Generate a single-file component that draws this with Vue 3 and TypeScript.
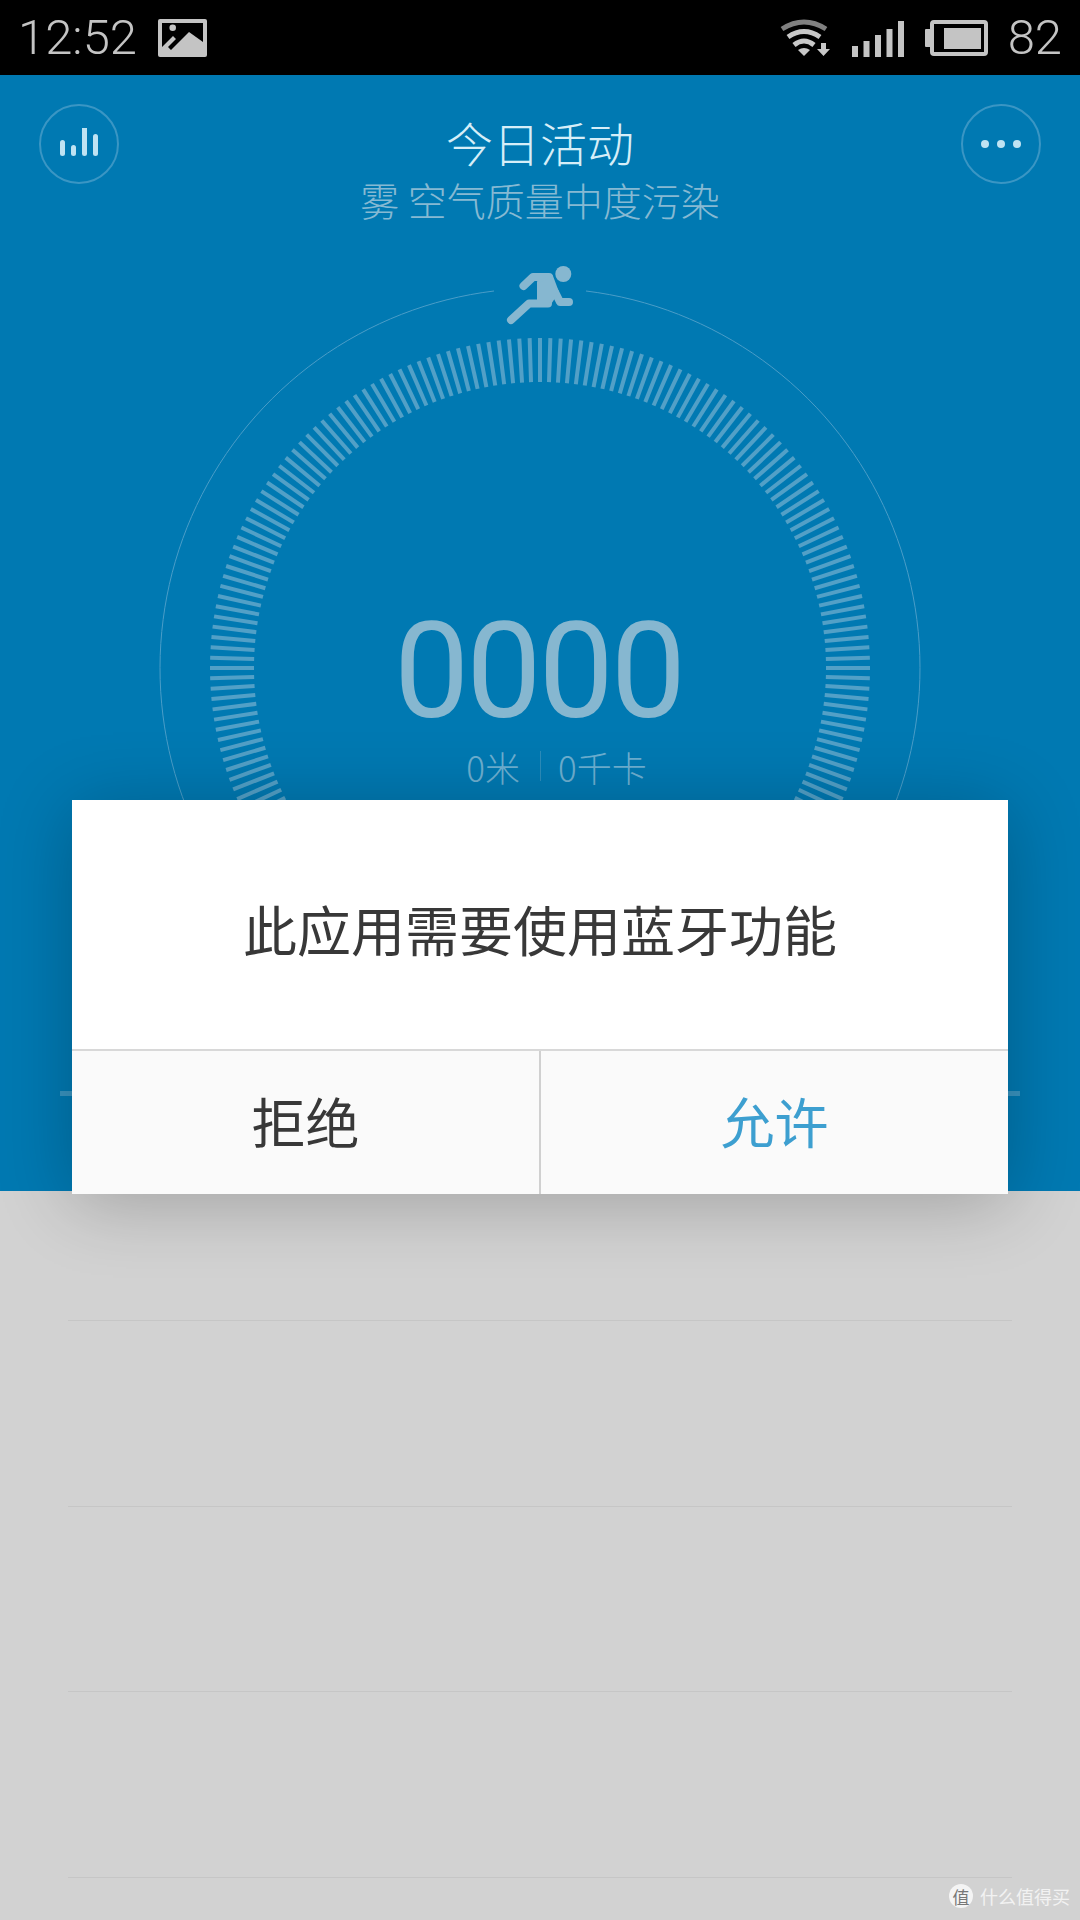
<script setup lang="ts">
// Dial ticks are generated around the ring; everything else is static markup.
const CX = 400
const CY = 410
const TICKS = 200

const ticks = Array.from({ length: TICKS }, (_, i) => {
  const a = (i / TICKS) * Math.PI * 2
  return {
    x1: CX + Math.sin(a) * 286,
    y1: CY - Math.cos(a) * 286,
    x2: CX + Math.sin(a) * 330,
    y2: CY - Math.cos(a) * 330,
  }
})

const signalBars = [
  { x: 0, h: 11 },
  { x: 11.5, h: 16 },
  { x: 23, h: 22 },
  { x: 34.5, h: 28 },
  { x: 46, h: 36 },
]

const rows = [1, 2, 3, 4]
</script>

<template>
  <div class="page">
    <header class="status">
      <span class="status-text">12:52</span>
      <svg class="status-image" width="49" height="38" viewBox="0 0 49 38">
        <rect width="49" height="38" rx="2" fill="#c4c4c4" />
        <path d="M4 4H45V23L31 13L13 31L10 28L18 20L15 17L4 28Z" fill="#000" />
        <circle cx="14.700" cy="8.700" r="3.300" fill="#c4c4c4" />
      </svg>
      <span class="status-spacer"></span>
      <svg class="status-wifi" width="52" height="38" viewBox="0 0 52 38">
        <path d="M2 10Q24 -4 46 10" fill="none" stroke="#808080" stroke-width="5" />
        <path d="M8 18Q24 7 40 18" fill="none" stroke="#c8c8c8" stroke-width="5" />
        <path d="M14 26Q24 18 34 26" fill="none" stroke="#c8c8c8" stroke-width="5" />
        <path d="M18 31Q24 27 30 31L24 37Z" fill="#c8c8c8" />
        <path d="M41 24H46V30H50L43.500 37L37 30H41Z" fill="#c8c8c8" />
      </svg>
      <svg class="status-signal" width="52" height="36" viewBox="0 0 52 36">
        <rect v-for="b in signalBars" :key="b.x" :x="b.x" :y="36 - b.h" width="6" :height="b.h" fill="#c4c4c4" />
      </svg>
      <svg class="status-battery" width="63" height="36" viewBox="0 0 63 36">
        <rect x="0" y="9" width="7" height="18" rx="1" fill="#c4c4c4" />
        <rect x="7" y="2" width="54" height="32" rx="2" fill="none" stroke="#c4c4c4" stroke-width="4" />
        <rect x="19" y="8" width="37" height="21" fill="#c4c4c4" />
      </svg>
      <span class="status-text status-level">82</span>
    </header>

    <section class="hero">
      <div class="hero-top">
        <button class="round-btn" aria-label="Stats">
          <svg width="40" height="32" viewBox="-1 2 40 32">
            <rect x="0" y="14" width="5" height="16" rx="2.500" fill="#bfe3f3" />
            <rect x="11" y="19" width="5" height="11" rx="2.500" fill="#bfe3f3" />
            <rect x="22" y="0" width="5" height="30" rx="2.500" fill="#bfe3f3" />
            <rect x="33" y="8" width="5" height="22" rx="2.500" fill="#bfe3f3" />
          </svg>
        </button>
        <div class="titles">
          <div class="title">今日活动</div>
          <div class="subtitle">雾 空气质量中度污染</div>
        </div>
        <button class="round-btn" aria-label="More">
          <svg width="40" height="10" viewBox="0 0 40 10">
            <circle cx="4" cy="5" r="4" fill="#bfe3f3" />
            <circle cx="20" cy="5" r="4" fill="#bfe3f3" />
            <circle cx="36" cy="5" r="4" fill="#bfe3f3" />
          </svg>
        </button>
      </div>

      <div class="dial">
        <svg width="800" height="800" viewBox="0 0 800 800">
          <path d="M354 33A380 380 0 1 0 446 33" fill="none" stroke="#4a9dc8" stroke-width="1" />
          <line
            v-for="(t, i) in ticks"
            :key="i"
            :x1="t.x1"
            :y1="t.y1"
            :x2="t.x2"
            :y2="t.y2"
            stroke="#52a0c7"
            stroke-width="4"
          />
          <!-- runner, page coords shifted by the dial origin (140, 258) -->
          <g transform="translate(-140 -258)" fill="none" stroke="#86b7d0" stroke-linecap="round" stroke-linejoin="round">
            <circle cx="563.300" cy="274" r="8" fill="#86b7d0" stroke="none" />
            <path d="M523.500 286L533 277H549" stroke-width="8" />
            <path d="M555 292L560 302H569" stroke-width="8" />
            <path d="M511 320L529 303.500H548" stroke-width="8" />
            <path d="M538 282L552 276L558 292L550 304H538Z" fill="#86b7d0" stroke-width="2" />
          </g>
        </svg>
        <div class="count">0000</div>
        <div class="meta">
          <span class="meta-item meta-left">0米</span>
          <span class="meta-sep"></span>
          <span class="meta-item meta-right">0千卡</span>
        </div>
      </div>

      <div class="hero-line"></div>
    </section>

    <section class="list">
      <div v-for="r in rows" :key="r" class="row"></div>
    </section>

    <div class="dialog">
      <div class="dialog-body">此应用需要使用蓝牙功能</div>
      <div class="dialog-actions">
        <button class="action">拒绝</button>
        <button class="action action-ok">允许</button>
      </div>
    </div>

    <div class="mark">
      <span class="mark-logo">值</span>
      <span class="mark-text">什么值得买</span>
    </div>
  </div>
</template>

<style scoped>
.page {
  position: relative;
  display: flex;
  flex-direction: column;
  width: 1080px;
  height: 1920px;
  overflow: hidden;
  background: #d2d2d2;
  font-family: "Noto Sans CJK SC", "Noto Sans", sans-serif;
}

.status {
  display: flex;
  align-items: center;
  flex: 0 0 75px;
  height: 75px;
  padding: 0 18px 0 18px;
  box-sizing: border-box;
  background: #000;
}

.status-text {
  color: #c4c4c4;
  font-family: Roboto, sans-serif;
  font-size: 49px;
  font-weight: 300;
  line-height: 77px;
}

.status-image {
  margin-left: 21px;
}

.status-spacer {
  flex: 1;
}

.status-signal {
  margin-left: 20px;
  margin-top: 2px;
}

.status-battery {
  margin-left: 21px;
}

.status-level {
  margin-left: 20px;
}

.hero {
  flex: 0 0 1116px;
  height: 1116px;
  background: #0079b2;
}

.hero-top {
  display: flex;
  justify-content: space-between;
  align-items: flex-start;
  height: 154px;
  padding: 29px 39px 0;
  box-sizing: border-box;
}

.round-btn {
  display: flex;
  align-items: center;
  justify-content: center;
  width: 80px;
  height: 80px;
  padding: 0;
  box-sizing: border-box;
  border: 2px solid #3a96c4;
  border-radius: 50%;
  background: transparent;
}

.titles {
  padding-top: 8px;
  text-align: center;
}

.title {
  color: #d6eef8;
  font-size: 47px;
  font-weight: 300;
  line-height: 60px;
}

.subtitle {
  margin-top: 4px;
  color: #86b9d3;
  font-size: 39px;
  font-weight: 300;
  line-height: 46px;
}

.dial {
  position: relative;
  display: flex;
  justify-content: center;
  height: 800px;
  margin-top: 29px;
}

.count {
  position: absolute;
  left: 0;
  right: 3px;
  top: 356px;
  color: #86b7d0;
  font-family: Roboto, sans-serif;
  font-size: 134px;
  line-height: 116px;
  letter-spacing: -3px;
  text-align: center;
}

.meta {
  position: absolute;
  left: 0;
  right: 0;
  top: 483px;
  display: flex;
  justify-content: center;
  align-items: center;
  height: 50px;
  padding-right: 2px;
  color: #6dafd0;
  font-size: 35px;
  font-weight: 300;
}

.meta-item {
  flex: 1;
}

.meta-left {
  padding-right: 20px;
  text-align: right;
}

.meta-right {
  padding-left: 17px;
}

.meta-sep {
  width: 1px;
  height: 30px;
  background: #2d8dbb;
}

.hero-line {
  height: 5px;
  margin: 33px 60px 0;
  background: #3a94c0;
}

.list {
  flex: 1;
  padding: 0 68px;
}

.row {
  height: 185.7px;
  box-sizing: border-box;
  border-bottom: 1px solid #c6c6c6;
}

.row:first-child {
  height: 130px;
}

.dialog {
  position: absolute;
  left: 72px;
  top: 800px;
  width: 936px;
  height: 394px;
  display: flex;
  flex-direction: column;
  background: #fff;
  box-shadow: 0 8px 70px rgba(0, 0, 0, 0.24);
}

.dialog-body {
  flex: 0 0 249px;
  display: flex;
  align-items: center;
  justify-content: center;
  padding-top: 8px;
  box-sizing: border-box;
  color: #383838;
  font-size: 54px;
}

.dialog-actions {
  flex: 1;
  display: flex;
  border-top: 2px solid #d8d8d8;
  background: #fafafa;
}

.action {
  flex: 1;
  padding: 0 0 4px;
  border: none;
  background: transparent;
  color: #383838;
  font-family: inherit;
  font-size: 54px;
}

.action-ok {
  border-left: 2px solid #d0d0d0;
  color: #3d9fd0;
}

.mark {
  position: absolute;
  right: 10px;
  bottom: 12px;
  display: flex;
  align-items: center;
  gap: 7px;
}

.mark-logo {
  display: flex;
  align-items: center;
  justify-content: center;
  width: 24px;
  height: 24px;
  border-radius: 50%;
  background: #f4f4f4;
  color: #777;
  font-size: 17px;
}

.mark-text {
  color: #f2f2f2;
  font-size: 18px;
  line-height: 24px;
}
</style>
